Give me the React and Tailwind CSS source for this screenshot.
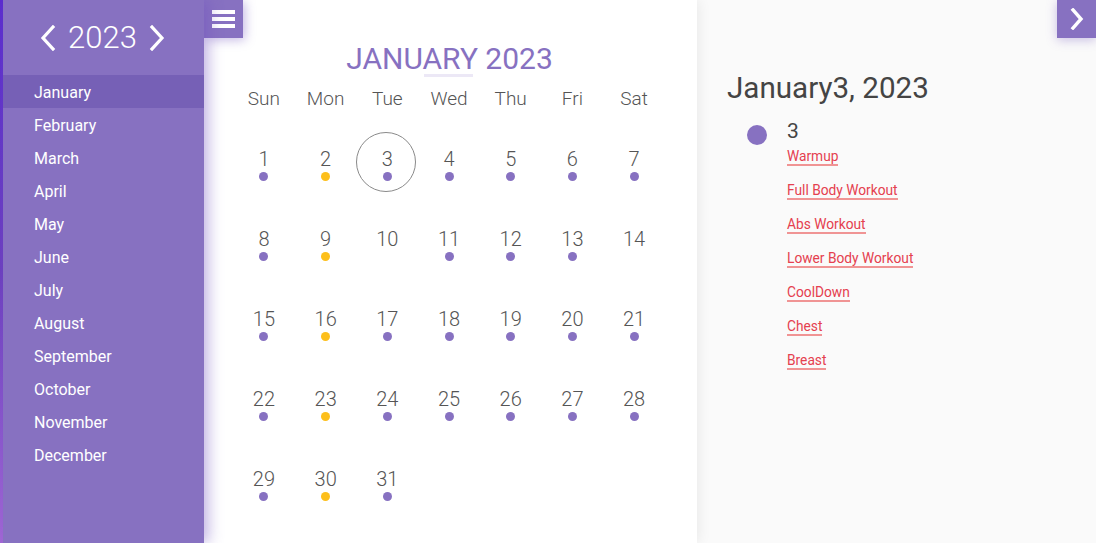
import React from "react";

const months = ["January","February","March","April","May","June","July","August","September","October","November","December"];
const yellow = new Set([2, 9, 16, 23, 30]);
const none = new Set([10, 14]);
const links = ["Warmup","Full Body Workout","Abs Workout","Lower Body Workout","CoolDown","Chest","Breast"];

function Chevron({ dir, className }) {
  return (
    <svg className={className} viewBox="0 0 16 26" fill="none" stroke="white" strokeWidth="3.2" strokeLinecap="square">
      {dir === "left" ? <path d="M13 2 L3 13 L13 24" /> : <path d="M3 2 L13 13 L3 24" />}
    </svg>
  );
}

export default function App() {
  const days = [];
  for (let i = 1; i <= 31; i++) days.push(i);
  return (
    <div className="h-[543px] w-[1096px] flex overflow-hidden" style={{ fontFamily: "Roboto, 'Liberation Sans', sans-serif" }}>
      <div className="w-[3px] h-full bg-gradient-to-b from-[#5a2ad0] via-[#6d3fc0] to-[#a468d6]" />
      <div className="w-[201px] h-full bg-[#8771c1] relative z-20 shadow-[4px_0_14px_rgba(110,80,190,0.45)] flex flex-col">
        <div className="h-[75px] flex items-center justify-center gap-[12px] pr-[2px]">
          <Chevron dir="left" className="w-[16px] h-[26px]" />
          <span className="text-white text-[31px] font-light leading-none">2023</span>
          <Chevron dir="right" className="w-[16px] h-[26px]" />
        </div>
        <ul>
          {months.map((m, i) => (
            <li key={m} className={`h-[33px] flex items-center pl-[31px] pt-[2px] text-white text-[16px] ${i === 0 ? "bg-[#7660b6]" : ""}`}>{m}</li>
          ))}
        </ul>
      </div>
      <div className="w-[493px] h-full bg-white relative z-10 shadow-[0_0_14px_rgba(0,0,0,0.09)]">
        <div className="absolute left-0 top-0 w-[39px] h-[38px] bg-[#8771c1] shadow-[2px_2px_10px_rgba(110,80,190,0.4)] flex flex-col items-center justify-center gap-[3px]">
          <div className="w-[23px] h-[4px] bg-white" />
          <div className="w-[23px] h-[4px] bg-white" />
          <div className="w-[23px] h-[4px] bg-white" />
        </div>
        <div className="pt-[42px] flex flex-col items-center">
          <div className="relative text-[#8771c1] text-[30px] leading-[34px] font-normal mr-[2px]">
            JANUARY 2023
            <div className="absolute left-[78px] top-[32px] w-[49px] h-[3px] bg-[#ece8f6]" />
          </div>
          <div className="grid grid-cols-[repeat(7,61.7px)] mt-[12px] mr-[3px] text-[#555] text-[19px] font-light">
            {["Sun","Mon","Tue","Wed","Thu","Fri","Sat"].map((d) => (
              <div key={d} className="text-center h-[22px] leading-[22px]">{d}</div>
            ))}
          </div>
          <div className="grid grid-cols-[repeat(7,61.7px)] mt-[30px] mr-[3px] text-[#555] text-[20px] font-light">
            {days.map((d) => (
              <div key={d} className="h-[80px] flex flex-col items-center relative">
                {d === 3 && <div className="absolute left-[0px] top-[-8px] w-[60px] h-[60px] rounded-full border border-[#8a8a8a]" />}
                <span className="leading-[22px] h-[22px] mt-[8px]">{d}</span>
                {!none.has(d) && <span className={`mt-[2px] w-[9px] h-[9px] rounded-full ${yellow.has(d) ? "bg-[#fdbf1b]" : "bg-[#8771c1]"}`} />}
              </div>
            ))}
          </div>
        </div>
      </div>
      <div className="flex-1 h-full bg-[#fafafa] relative">
        <div className="absolute right-0 top-0 w-[39px] h-[38px] bg-[#8771c1] shadow-[0_2px_10px_rgba(110,80,190,0.35)] flex items-center justify-center">
          <svg className="w-[14px] h-[22px]" viewBox="0 0 14 22" fill="none" stroke="white" strokeWidth="3.4" strokeLinecap="square">
            <path d="M3 2 L11 11 L3 20" />
          </svg>
        </div>
        <div className="pl-[30px] pt-[70px]">
          <div className="text-[#444] text-[29.6px] leading-[36px]">January3, 2023</div>
          <div className="flex mt-[12px]">
            <div className="w-[20px] h-[20px] rounded-full bg-[#8771c1] ml-[20px] mt-[7px]" />
            <div className="ml-[20px] flex flex-col items-start">
              <div className="text-[#444] text-[21px] leading-[24px] mt-[1px]">3</div>
              {links.map((l, i) => (
                <a key={l} href="#" className={`text-[#e5404f] text-[13.75px] leading-[16px] border-b-2 border-[#f09494] ${i === 0 ? "mt-[5px]" : "mt-[16px]"}`}>{l}</a>
              ))}
            </div>
          </div>
        </div>
      </div>
    </div>
  );
}
